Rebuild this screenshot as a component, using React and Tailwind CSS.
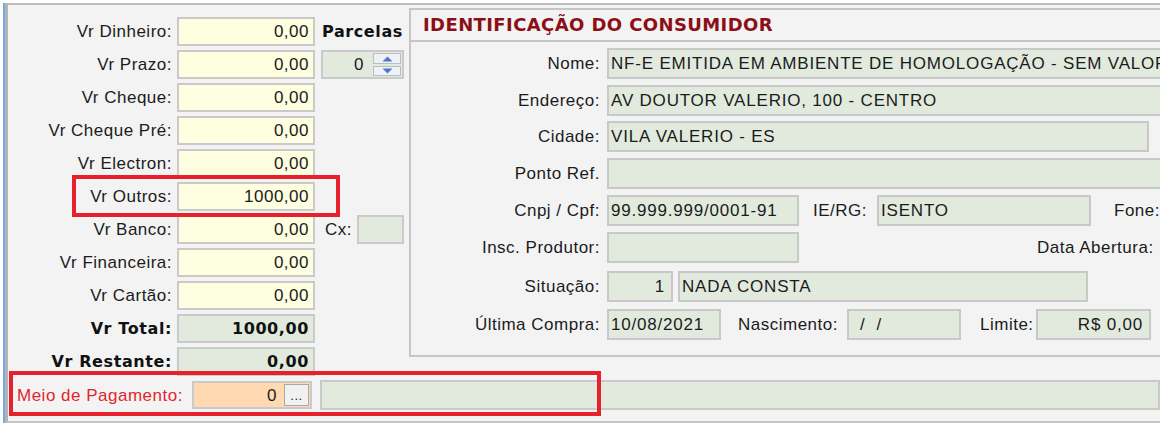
import React from "react";

const lbl = "text-[17px] tracking-[0.5px] leading-none whitespace-nowrap text-[#1b1b1b]";
const bLbl = "font-['DejaVu_Sans',sans-serif] font-bold text-[16px] tracking-[0.6px] leading-none whitespace-nowrap text-[#111111]";
const fBase = "border-2 border-[#cacaca] flex items-center overflow-hidden whitespace-nowrap";

function ValueText({ bold, children }) {
  return <span className={bold ? bLbl : lbl}>{children}</span>;
}

function LeftRow({ label, value, bold, green, extra }) {
  return (
    <div className="flex items-center h-[29px]">
      <div className={`w-[164px] text-right ${bold ? bLbl : lbl}`}>{label}</div>
      <div
        className={`ml-[5px] w-[138px] h-[29px] justify-end pr-[4px] ${fBase} ${
          green ? "bg-[#e2eade]" : "bg-[#fefee1]"
        }`}
      >
        <ValueText bold={bold}>{value}</ValueText>
      </div>
      <div className="ml-[6px] w-[83px] h-[29px] flex items-center">{extra}</div>
    </div>
  );
}

function Tri({ down }) {
  return (
    <svg width="11" height="6" viewBox="0 0 11 6">
      {down ? (
        <path d="M0.5 0.5 H10.5 L5.5 5.5 Z" fill="#4f78c9" />
      ) : (
        <path d="M0.5 5.5 H10.5 L5.5 0.5 Z" fill="#4f78c9" />
      )}
    </svg>
  );
}

function Spinner() {
  return (
    <div className={`w-[83px] h-[29px] bg-[#e2eade] ${fBase} justify-end pr-[1px]`}>
      <span className={lbl}>0</span>
      <div className="ml-[9px] flex flex-col gap-[2px]">
        <div className="w-[28px] h-[11px] border border-[#b9bec6] bg-[#eef1f5] flex items-center justify-center">
          <Tri />
        </div>
        <div className="w-[28px] h-[10px] border border-[#b9bec6] bg-[#eef1f5] flex items-center justify-center">
          <Tri down />
        </div>
      </div>
    </div>
  );
}

function PLabel({ children }) {
  return <div className={`w-[189px] text-right ${lbl}`}>{children}</div>;
}

const pField = "h-[31px] border-2 border-[#c8c8c8] bg-[#e2eade] flex items-center overflow-hidden whitespace-nowrap";
const pText = "text-[17px] tracking-[0.8px] leading-none text-[#1b1b1b] whitespace-nowrap";

export default function App() {
  return (
    <div className="w-[1160px] h-[431px] bg-white overflow-hidden relative font-['Liberation_Sans',Arial,sans-serif]">
      <div className="ml-[3px] mt-[3px] h-[420px] border-l-2 border-l-[#74a9e6] flex">
        <div className="flex-1 min-w-0 border-l-[3px] border-l-[#b4b4b4] border-t-2 border-t-[#bdbdbd] border-b-2 border-b-[#c4c4c4] bg-[#f3f3f3] overflow-hidden">
          <div className="flex items-start">
            <div className="flex flex-col gap-[4px] pt-[12px] shrink-0">
              <LeftRow
                label="Vr Dinheiro:"
                value="0,00"
                extra={<span className={`pl-[1px] ${bLbl}`}>Parcelas</span>}
              />
              <LeftRow label="Vr Prazo:" value="0,00" extra={<Spinner />} />
              <LeftRow label="Vr Cheque:" value="0,00" />
              <LeftRow label="Vr Cheque Pré:" value="0,00" />
              <LeftRow label="Vr Electron:" value="0,00" />
              <LeftRow label="Vr Outros:" value="1000,00" />
              <LeftRow
                label="Vr Banco:"
                value="0,00"
                extra={
                  <>
                    <span className={`w-[36px] pl-[4px] ${lbl}`}>Cx:</span>
                    <div className={`w-[47px] h-[29px] bg-[#e2eade] ${fBase}`} />
                  </>
                }
              />
              <LeftRow label="Vr Financeira:" value="0,00" />
              <LeftRow label="Vr Cartão:" value="0,00" />
              <LeftRow label="Vr Total:" value="1000,00" bold green />
              <LeftRow label="Vr Restante:" value="0,00" bold green />
            </div>

            <div className="ml-[5px] mt-[3px] w-[770px] h-[349px] shrink-0 border-2 border-[#c6c6c6] flex flex-col">
              <div className="h-[32px] border-b-2 border-[#c6c6c6] pl-[12px] flex items-center">
                <span className="font-['DejaVu_Sans',sans-serif] font-bold text-[18px] tracking-[0.4px] leading-none text-[#8c0f16] whitespace-nowrap">
                  IDENTIFICAÇÃO DO CONSUMIDOR
                </span>
              </div>
              <div className="flex flex-col">
                <div className="flex items-center h-[31px] mt-[6px]">
                  <PLabel>Nome:</PLabel>
                  <div className={`ml-[7px] flex-1 pl-[2px] ${pField}`}>
                    <span className={pText}>NF-E EMITIDA EM AMBIENTE DE HOMOLOGAÇÃO - SEM VALOR FISCAL</span>
                  </div>
                </div>
                <div className="flex items-center h-[31px] mt-[6px]">
                  <PLabel>Endereço:</PLabel>
                  <div className={`ml-[7px] flex-1 pl-[2px] ${pField}`}>
                    <span className={pText}>AV DOUTOR VALERIO, 100 - CENTRO</span>
                  </div>
                </div>
                <div className="flex items-center h-[31px] mt-[5px]">
                  <PLabel>Cidade:</PLabel>
                  <div className={`ml-[7px] w-[542px] pl-[2px] ${pField}`}>
                    <span className={pText}>VILA VALERIO - ES</span>
                  </div>
                </div>
                <div className="flex items-center h-[31px] mt-[6px]">
                  <PLabel>Ponto Ref.</PLabel>
                  <div className={`ml-[7px] flex-1 ${pField}`} />
                </div>
                <div className="flex items-center h-[31px] mt-[6px]">
                  <PLabel>Cnpj / Cpf:</PLabel>
                  <div className={`ml-[7px] w-[192px] pl-[2px] ${pField}`}>
                    <span className={pText}>99.999.999/0001-91</span>
                  </div>
                  <span className={`ml-[14px] w-[64px] ${lbl}`}>IE/RG:</span>
                  <div className={`w-[214px] pl-[2px] ${pField}`}>
                    <span className={pText}>ISENTO</span>
                  </div>
                  <span className={`ml-[23px] ${lbl}`}>Fone:</span>
                </div>
                <div className="flex items-center h-[31px] mt-[6px]">
                  <PLabel>Insc. Produtor:</PLabel>
                  <div className={`ml-[7px] w-[192px] ${pField}`} />
                  <span className={`ml-[238px] ${lbl}`}>Data Abertura:</span>
                </div>
                <div className="flex items-center h-[31px] mt-[8px]">
                  <PLabel>Situação:</PLabel>
                  <div className={`ml-[7px] w-[66px] justify-end pr-[6px] ${pField}`}>
                    <span className={pText}>1</span>
                  </div>
                  <div className={`ml-[5px] w-[410px] pl-[2px] ${pField}`}>
                    <span className={pText}>NADA CONSTA</span>
                  </div>
                </div>
                <div className="flex items-center h-[31px] mt-[7px]">
                  <PLabel>Última Compra:</PLabel>
                  <div className={`ml-[7px] w-[114px] pl-[2px] ${pField}`}>
                    <span className={pText}>10/08/2021</span>
                  </div>
                  <span className={`ml-[17px] w-[109px] ${lbl}`}>Nascimento:</span>
                  <div className={`w-[114px] pl-[11px] ${pField}`}>
                    <span className={`${pText} whitespace-pre`}>/  /</span>
                  </div>
                  <span className={`ml-[19px] w-[56px] ${lbl}`}>Limite:</span>
                  <div className={`w-[115px] justify-end pr-[6px] ${pField}`}>
                    <span className={pText}>R$ 0,00</span>
                  </div>
                </div>
              </div>
            </div>
          </div>

          <div className="flex items-center h-[30px] mt-[4px] pl-[9px]">
            <span className="w-[175px] text-[17px] tracking-[0.5px] leading-none whitespace-nowrap text-[#e0262e]">
              Meio de Pagamento:
            </span>
            <div className={`w-[120px] h-[28px] bg-[#fed9b1] justify-end pr-[1px] ${fBase}`}>
              <span className={lbl}>0</span>
              <div className="ml-[7px] w-[25px] h-[22px] border border-[#a9a9a9] bg-[#f1f1f1] flex items-end justify-center pb-[3px]">
                <span className="text-[13px] leading-none text-[#222222] tracking-[0.5px]">...</span>
              </div>
            </div>
            <div className={`ml-[8px] flex-1 h-[30px] bg-[#e2eade] ${fBase}`} />
          </div>
        </div>
      </div>

      <div className="absolute left-[72px] top-[175px] w-[268px] h-[42px] border-4 border-[#e5222b]" />
      <div className="absolute left-[9px] top-[371px] w-[592px] h-[45px] border-4 border-[#e5222b]" />
    </div>
  );
}
